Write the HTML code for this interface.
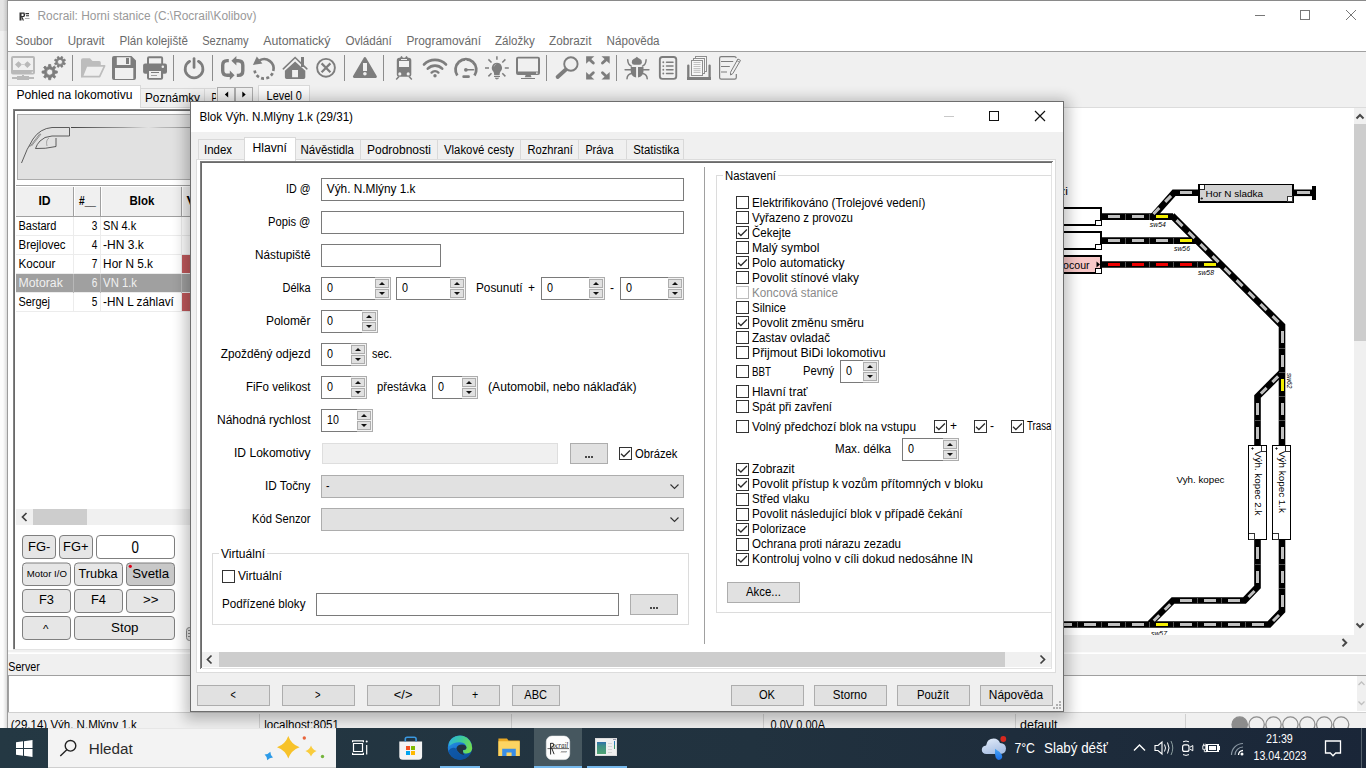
<!DOCTYPE html>
<html><head><meta charset="utf-8"><title>Rocrail</title>
<style>
html,body{margin:0;padding:0;background:#f0f0f0;overflow:hidden;}
body{width:1366px;height:768px;position:relative;font-family:"Liberation Sans",sans-serif;}
svg{position:absolute;left:0;top:0;display:block;font-family:"Liberation Sans",sans-serif;}
svg rect{shape-rendering:crispEdges;}
</style></head><body>
<svg width="1366" height="768" viewBox="0 0 1366 768">
<rect x="0" y="0" width="1366" height="768" fill="#f0f0f0" />
<rect x="0" y="0" width="8" height="31" fill="#e4e4e4" />
<rect x="0" y="31" width="8" height="39" fill="#f0f0f0" />
<rect x="0" y="70" width="8" height="658" fill="#fcfcfc" />
<defs><linearGradient id="lsh" x1="0" x2="1" y1="0" y2="0"><stop offset="0" stop-color="#000" stop-opacity="0"/><stop offset="1" stop-color="#000" stop-opacity="0.13"/></linearGradient><linearGradient id="rsh" x1="0" x2="1" y1="0" y2="0"><stop offset="0" stop-color="#000" stop-opacity="0.30"/><stop offset="1" stop-color="#000" stop-opacity="0"/></linearGradient><linearGradient id="tsh" x1="0" x2="0" y1="0" y2="1"><stop offset="0" stop-color="#000" stop-opacity="0"/><stop offset="1" stop-color="#000" stop-opacity="0.25"/></linearGradient><linearGradient id="bsh" x1="0" x2="0" y1="0" y2="1"><stop offset="0" stop-color="#000" stop-opacity="0.35"/><stop offset="1" stop-color="#000" stop-opacity="0"/></linearGradient><linearGradient id="tb" x1="0" x2="1" y1="0" y2="0"><stop offset="0" stop-color="#243843"/><stop offset="0.55" stop-color="#21323f"/><stop offset="1" stop-color="#1a2638"/></linearGradient></defs>
<rect x="3" y="0" width="4" height="728" fill="url(#lsh)" />
<rect x="8" y="1" width="1358" height="50" fill="#ffffff" />
<rect x="7" y="0" width="1359" height="1" fill="#8a8a8a" />
<rect x="7" y="0" width="1" height="728" fill="#9c9c9c" />
<rect x="8" y="51" width="1358" height="1" fill="#a0a0a0" />
<path d="M19.5,12.5h2v8h-2z M21.5,12.5h3v1.2h-3z M23.500,13.500h1.5v2.5h-1.5z M21.5,16h3v1h-3z M22.500,17l1.500,3.500h-1.3l-1.200,-3z" fill="#333" />
<path d="M25.5,13h3.500v1.200h-3.500z M26,15.200h3v1h-3z" fill="#333" />
<path d="M25,18h4.5v0.8h-4.5z" fill="#999" />
<text x="37.5" y="20" font-size="12" fill="#999999" textLength="219.0" lengthAdjust="spacingAndGlyphs" >Rocrail: Horni stanice (C:\Rocrail\Kolibov)</text>
<rect x="1255" y="15" width="10" height="1" fill="#777" />
<rect x="1300.5" y="10.5" width="9" height="9" fill="none" stroke="#777" stroke-width="1"/>
<path d="M1346,10 L1356,20 M1356,10 L1346,20" fill="none" stroke="#777" stroke-width="1" />
<text x="15.5" y="44.7" font-size="12" fill="#6a6a6a" textLength="37.3" lengthAdjust="spacingAndGlyphs" >Soubor</text>
<text x="67.7" y="44.7" font-size="12" fill="#6a6a6a" textLength="36.8" lengthAdjust="spacingAndGlyphs" >Upravit</text>
<text x="119.5" y="44.7" font-size="12" fill="#6a6a6a" textLength="68.4" lengthAdjust="spacingAndGlyphs" >Plán kolejiště</text>
<text x="202.2" y="44.7" font-size="12" fill="#6a6a6a" textLength="46.3" lengthAdjust="spacingAndGlyphs" >Seznamy</text>
<text x="263.2" y="44.7" font-size="12" fill="#6a6a6a" textLength="67.2" lengthAdjust="spacingAndGlyphs" >Automatický</text>
<text x="345.4" y="44.7" font-size="12" fill="#6a6a6a" textLength="46.4" lengthAdjust="spacingAndGlyphs" >Ovládání</text>
<text x="406.4" y="44.7" font-size="12" fill="#6a6a6a" textLength="74.6" lengthAdjust="spacingAndGlyphs" >Programování</text>
<text x="495" y="44.7" font-size="12" fill="#6a6a6a" textLength="39.8" lengthAdjust="spacingAndGlyphs" >Záložky</text>
<text x="549.1" y="44.7" font-size="12" fill="#6a6a6a" textLength="42.4" lengthAdjust="spacingAndGlyphs" >Zobrazit</text>
<text x="606.6" y="44.7" font-size="12" fill="#6a6a6a" textLength="53.0" lengthAdjust="spacingAndGlyphs" >Nápověda</text>
<rect x="8" y="52" width="1358" height="56" fill="#f0f0f0" />
<rect x="72" y="55" width="1" height="26" fill="#8c8c8c" />
<rect x="173" y="55" width="1" height="26" fill="#8c8c8c" />
<rect x="212" y="55" width="1" height="26" fill="#8c8c8c" />
<rect x="344" y="55" width="1" height="26" fill="#8c8c8c" />
<rect x="383" y="55" width="1" height="26" fill="#8c8c8c" />
<rect x="546" y="55" width="1" height="26" fill="#8c8c8c" />
<rect x="616" y="55" width="1" height="26" fill="#8c8c8c" />
<path d="M13,56 h20 q2,0 2,2 v14.500 q0,2 -2,2 h-20 q-2,0 -2,-2 v-14.500 q0,-2 2,-2 z M13,58 v12 h20 v-12 z" fill="#b9b9b9" fill-rule="evenodd"/>
<path d="M15,64.6 l3.500,-3.300 l3.500,3.300 l-3.500,3.300 z M23.900,64.6 l3.500,-3.300 l3.500,3.300 l-3.500,3.300 z" fill="#b9b9b9" />
<rect x="20.5" y="63.8" width="4.9" height="1.6" fill="#cfcfcf" />
<rect x="22.9" y="63.3" width="0.2" height="2.7" fill="#f0f0f0" />
<circle cx="32.300" cy="72.300" r="0.700" fill="#f0f0f0"/>
<rect x="22" y="74.5" width="2" height="1.5" fill="#b9b9b9" />
<rect x="17" y="76" width="12" height="3.6" fill="#b9b9b9" />
<rect x="12" y="77.4" width="22" height="1.6" fill="#b9b9b9" />
<path d="M55.04,70.79 L57.34,71.10 L57.34,73.10 L55.04,73.41 L54.40,74.95 L55.80,76.79 L54.39,78.20 L52.55,76.80 L51.01,77.44 L50.70,79.74 L48.70,79.74 L48.39,77.44 L46.85,76.80 L45.01,78.20 L43.60,76.79 L45.00,74.95 L44.36,73.41 L42.06,73.10 L42.06,71.10 L44.36,70.79 L45.00,69.25 L43.60,67.41 L45.01,66.00 L46.85,67.40 L48.39,66.76 L48.70,64.46 L50.70,64.46 L51.01,66.76 L52.55,67.40 L54.39,66.00 L55.80,67.41 L54.40,69.25 Z M52.800000000000004,72.1 A3.1,3.1 0 1,0 46.6,72.1 A3.1,3.1 0 1,0 52.800000000000004,72.1 Z" fill="#7d7d7d" stroke="#7d7d7d" stroke-width="0.8" fill-rule="evenodd" stroke-linejoin="round"/>
<path d="M63.87,62.38 L65.44,63.25 L64.80,64.79 L63.07,64.30 L62.40,64.97 L62.89,66.70 L61.35,67.34 L60.48,65.77 L59.52,65.77 L58.65,67.34 L57.11,66.70 L57.60,64.97 L56.93,64.30 L55.20,64.79 L54.56,63.25 L56.13,62.38 L56.13,61.42 L54.56,60.55 L55.20,59.01 L56.93,59.50 L57.60,58.83 L57.11,57.10 L58.65,56.46 L59.52,58.03 L60.48,58.03 L61.35,56.46 L62.89,57.10 L62.40,58.83 L63.07,59.50 L64.80,59.01 L65.44,60.55 L63.87,61.42 Z M62.5,61.9 A2.5,2.5 0 1,0 57.5,61.9 A2.5,2.5 0 1,0 62.5,61.9 Z" fill="#7d7d7d" stroke="#7d7d7d" stroke-width="0.8" fill-rule="evenodd" stroke-linejoin="round"/>
<path d="M81,77.600 V60 Q81,58.2 83,58.2 H90 L92.5,61.1 H99.3 Q100.8,61.1 100.8,62.6 V65.5 H86.5 L82,77.600 Z" fill="#bdbdbd" />
<path d="M86.6,65.8 H104.6 L99.6,76.6 H82.2 Z" fill="#f0f0f0" stroke="#bdbdbd" stroke-width="1.7" stroke-linejoin="round"/>
<path d="M114,56 H131.5 L136,60.5 V78 Q136,80 134,80 H114 Q112,80 112,78 V58 Q112,56 114,56 Z M116.8,57.3 V64.9 H130.5 V57.3 Z M115,68 V79 H133.3 V68 Z" fill="#7d7d7d" fill-rule="evenodd"/>
<rect x="126" y="58.2" width="2.7" height="5.4" fill="#7d7d7d" />
<path d="M147,64.5 V58.2 Q147,56.2 149,56.2 H161.1 Q163.1,56.2 163.1,58.2 V64.5 H161.2 V58.300 H149 V64.5 Z" fill="#7d7d7d" />
<path d="M145.1,63.6 H165 Q167,63.6 167,65.6 V71.8 Q167,73.8 165,73.8 H145.1 Q143.1,73.8 143.1,71.8 V65.6 Q143.1,63.6 145.1,63.6 Z" fill="#7d7d7d" />
<circle cx="162.800" cy="66.800" r="1.250" fill="#f0f0f0"/>
<path d="M147,70 H163.1 V77.800 Q163.1,79.800 161.1,79.800 H149 Q147,79.800 147,77.800 Z" fill="#7d7d7d" />
<rect x="149" y="71" width="12.2" height="7" fill="#f0f0f0" />
<rect x="150.5" y="72" width="8.8" height="1.3" fill="#7d7d7d" />
<rect x="150.5" y="74.6" width="6.0" height="1.2" fill="#a0a0a0" />
<path d="M189.7,61.3 A8.85,8.85 0 1,0 198.4,61.3" fill="none" stroke="#7d7d7d" stroke-width="2.7" stroke-linecap="round"/>
<path d="M194.05,58.6 V67.500" fill="none" stroke="#7d7d7d" stroke-width="2.7" stroke-linecap="round"/>
<path d="M228.8,60.6 H227.2 Q222.7,60.6 222.7,65.2 V70.8 Q222.7,75.3 227.2,75.3 H230.500" fill="none" stroke="#7d7d7d" stroke-width="3.4" />
<path d="M229.8,70.6 L234.6,75.3 L229.8,80 Z" fill="#7d7d7d" />
<path d="M236.8,75.4 H238.300 Q242.8,75.4 242.8,70.8 V65.2 Q242.8,60.7 238.300,60.7 H235.500" fill="none" stroke="#7d7d7d" stroke-width="3.4" />
<path d="M236.4,56 L231.400,60.7 L236.4,65.4 Z" fill="#7d7d7d" />
<path d="M259.500,60.300 A9.5,9.5 0 0,1 273.300,71" fill="none" stroke="#7d7d7d" stroke-width="2.6" />
<path d="M256.8,56.4 L252.9,65 L262.4,63.6 Z" fill="#7d7d7d" />
<path d="M273.300,71 A9.5,9.5 0 0,1 254.600,70.500" fill="none" stroke="#7d7d7d" stroke-width="2.7" stroke-dasharray="3 2.300" stroke-dashoffset="-2.300"/>
<path d="M283.3,68.8 L295.1,57.5 L306.9,68.8" fill="none" stroke="#7d7d7d" stroke-width="1.6" stroke-linecap="round"/>
<path d="M284.9,70.7 L295.1,61.6 L305.3,70.7 V77.300 Q305.3,79 303.600,79 H286.600 Q284.9,79 284.9,77.300 Z M292.1,69.9 V77.3 H298 V69.9 Z" fill="#7d7d7d" fill-rule="evenodd"/>
<rect x="300.8" y="56.8" width="2.7" height="9.7" fill="#7d7d7d" />
<circle cx="326" cy="67.8" r="8.9" fill="none" stroke="#7d7d7d" stroke-width="1.9"/>
<path d="M321.6,63.4 l8.800,8.800 M330.4,63.4 l-8.800,8.800" fill="none" stroke="#7d7d7d" stroke-width="2.2" />
<path d="M364.9,58.3 L375.6,76.6 H354.2 Z" fill="#7d7d7d" stroke="#7d7d7d" stroke-width="2.6" stroke-linejoin="round"/>
<rect x="363.4" y="62.9" width="3.1" height="8.5" fill="#f0f0f0" />
<circle cx="364.9" cy="73.7" r="1.8" fill="#f0f0f0"/>
<path d="M399.3,57.8 h9.500 q2.500,0 2.500,2.500 v14.500 q0,2 -2,2 h-10.500 q-2,0 -2,-2 v-14.500 q0,-2.500 2.500,-2.500 z" fill="#7d7d7d" />
<rect x="398.7" y="61.2" width="10.6" height="5.5" fill="#f0f0f0" />
<rect x="401.4" y="59.1" width="5.2" height="1.2" fill="#f0f0f0" />
<circle cx="399.8" cy="73.9" r="1.55" fill="#f0f0f0"/><circle cx="408.2" cy="73.9" r="1.55" fill="#f0f0f0"/>
<path d="M399,76.5 l-2.800,3 M409,76.5 l2.800,3" fill="none" stroke="#7d7d7d" stroke-width="1.5" />
<path d="M400.500,58 l1,-2 l1,2 z M405.500,58 l1,-2 l1,2 z" fill="#7d7d7d" stroke="#7d7d7d" stroke-width="0.6" />
<path d="M424,64.5 A15.500,15.500 0 0,1 446,64.5" fill="none" stroke="#7d7d7d" stroke-width="2.6" stroke-linecap="round"/>
<path d="M427.8,68.7 A10,10 0 0,1 442.2,68.7" fill="none" stroke="#7d7d7d" stroke-width="2.6" stroke-linecap="round"/>
<path d="M431.6,72.6 A5,5 0 0,1 438.4,72.6" fill="none" stroke="#7d7d7d" stroke-width="2.4" stroke-linecap="round"/>
<circle cx="435" cy="75.8" r="1.7" fill="#7d7d7d"/>
<path d="M457.300,75.500 A10.4,10.4 0 1,1 474.500,75.500" fill="none" stroke="#7d7d7d" stroke-width="2.8" stroke-linecap="butt"/>
<path d="M465.9,69.8 H473.500" fill="none" stroke="#7d7d7d" stroke-width="1.6" stroke-linecap="round"/>
<circle cx="465.900" cy="69.800" r="1.900" fill="#7d7d7d"/>
<path d="M463.600,76.650 H468.600" fill="none" stroke="#7d7d7d" stroke-width="2.6" stroke-linecap="round"/>
<path d="M465.900,60 v1.800 M459.700,62.800 l1.200,1.200 M472.100,62.800 l-1.200,1.200" fill="none" stroke="#f0f0f0" stroke-width="1" />
<path d="M496.9,62.8 a5.1,5.1 0 0,1 3.600,8.700 q-0.900,1.200 -0.900,3.800 h-5.400 q0,-2.600 -0.900,-3.800 a5.1,5.1 0 0,1 3.600,-8.700 z" fill="#7d7d7d" />
<rect x="494.3" y="76" width="5.2" height="1.2" fill="#7d7d7d" />
<path d="M495,78 h3.800 l-1.900,1.300 z" fill="#7d7d7d" stroke="#7d7d7d" stroke-width="0.5" />
<path d="M496.9,56.3 v3.500 M485,68 h4 M504.800,68 h4 M488.4,59.4 l3.100,3.100 M505.4,59.4 l-3.100,3.100 M488.4,76.4 l3.100,-3.100 M505.4,76.4 l-3.100,-3.100" fill="none" stroke="#7d7d7d" stroke-width="1.5" />
<path d="M494,66.500 q0.500,-2 2.300,-2.500" fill="none" stroke="#b0b0b0" stroke-width="0.8" />
<path d="M518,56.8 h20 q2,0 2,2 v14.100 q0,2 -2,2 h-20 q-2,0 -2,-2 v-14.100 q0,-2 2,-2 z M518,58.500 v12.900 h20 v-12.900 z" fill="#7d7d7d" fill-rule="evenodd"/>
<circle cx="536.900" cy="73.100" r="0.900" fill="#f0f0f0"/>
<path d="M525.600,74.900 h5.100 l0.800,2.300 h-6.700 z" fill="#7d7d7d" />
<rect x="521" y="77.8" width="14.2" height="1.5" fill="#7d7d7d" />
<circle cx="570.9" cy="64" r="6.700" fill="none" stroke="#7d7d7d" stroke-width="1.900"/>
<path d="M565.600,69.800 L557.600,77" fill="none" stroke="#7d7d7d" stroke-width="3.9" stroke-linecap="round"/>
<path d="M586.1,56.3 L594.3000000000001,56.3 L586.1,63.8 Z" fill="#7d7d7d" />
<path d="M589.1,59.099999999999994 L593.3000000000001,63.0" fill="none" stroke="#7d7d7d" stroke-width="2.9" stroke-linecap="round"/>
<path d="M609.7,56.3 L601.5,56.3 L609.7,63.8 Z" fill="#7d7d7d" />
<path d="M606.7,59.099999999999994 L602.5,63.0" fill="none" stroke="#7d7d7d" stroke-width="2.9" stroke-linecap="round"/>
<path d="M586.1,79.5 L594.3000000000001,79.5 L586.1,72.0 Z" fill="#7d7d7d" />
<path d="M589.1,76.7 L593.3000000000001,72.8" fill="none" stroke="#7d7d7d" stroke-width="2.9" stroke-linecap="round"/>
<path d="M609.7,79.5 L601.5,79.5 L609.7,72.0 Z" fill="#7d7d7d" />
<path d="M606.7,76.7 L602.5,72.8" fill="none" stroke="#7d7d7d" stroke-width="2.9" stroke-linecap="round"/>
<path d="M636.850,56.800 q1.200,1.400 3.200,2.200 q2,1 1.900,3.400 q-0.200,2.400 -2.600,2.400 h-5 q-2.400,0 -2.600,-2.400 q-0.100,-2.400 1.900,-3.400 q2,-0.800 3.200,-2.200 z" fill="#7d7d7d" />
<path d="M630.700,67.100 h5.400 v10.500 q-5.400,-1.200 -5.400,-6.500 z M643.500,67.100 h-5.500 v10.500 q5.500,-1.200 5.500,-6.500 z" fill="#7d7d7d" />
<path d="M627.700,59.800 q0.200,5 3.600,6.300 M646.100,59.800 q-0.200,5 -3.600,6.300 M625.100,69.800 h5.600 M643.500,69.800 h5.400 M631.500,73.600 q-4.300,0.800 -4.500,5.200 M642.700,73.600 q4.300,0.800 4.500,5.200" fill="none" stroke="#7d7d7d" stroke-width="1.5" stroke-linecap="round"/>
<rect x="659.85" y="56.95" width="16.4" height="21.9" fill="none" stroke="#7d7d7d" stroke-width="1.9" rx="2.6" style="shape-rendering:geometricPrecision"/>
<circle cx="663.300" cy="62.3" r="0.950" fill="#7d7d7d"/>
<path d="M666.500,62.3 H673" fill="none" stroke="#7d7d7d" stroke-width="1.5" stroke-linecap="round"/>
<circle cx="663.300" cy="66.1" r="0.950" fill="#7d7d7d"/>
<path d="M666.500,66.1 H673" fill="none" stroke="#7d7d7d" stroke-width="1.5" stroke-linecap="round"/>
<circle cx="663.300" cy="69.8" r="0.950" fill="#7d7d7d"/>
<path d="M666.500,69.8 H673" fill="none" stroke="#7d7d7d" stroke-width="1.5" stroke-linecap="round"/>
<circle cx="663.300" cy="73.5" r="0.950" fill="#7d7d7d"/>
<path d="M666.500,73.5 H673" fill="none" stroke="#7d7d7d" stroke-width="1.5" stroke-linecap="round"/>
<path d="M688.300,65.600 V78.300 H709.600 V65.600" fill="none" stroke="#7d7d7d" stroke-width="2.3" stroke-linecap="round"/>
<rect x="687.2" y="77" width="23.5" height="2.8" fill="#7d7d7d" />
<rect x="695.5" y="56.5" width="11.0" height="15.0" fill="#f6f6f6" stroke="#8e8e8e" stroke-width="1" style="shape-rendering:geometricPrecision"/>
<rect x="693.5" y="58.5" width="11.0" height="15.0" fill="#f6f6f6" stroke="#8e8e8e" stroke-width="1" style="shape-rendering:geometricPrecision"/>
<rect x="691.5" y="60.5" width="11.0" height="15.0" fill="#f6f6f6" stroke="#8e8e8e" stroke-width="1" style="shape-rendering:geometricPrecision"/>
<path d="M693.500,62.5 H700.500" fill="none" stroke="#b4b4b4" stroke-width="0.8" />
<path d="M693.500,64.5 H700.500" fill="none" stroke="#b4b4b4" stroke-width="0.8" />
<path d="M693.500,66.5 H700.500" fill="none" stroke="#b4b4b4" stroke-width="0.8" />
<path d="M693.500,68.5 H700.500" fill="none" stroke="#b4b4b4" stroke-width="0.8" />
<path d="M693.500,70.5 H700.500" fill="none" stroke="#c8c8c8" stroke-width="1.6" />
<path d="M693.500,72.5 H700.500" fill="none" stroke="#b4b4b4" stroke-width="0.8" />
<path d="M736.300,58.200 Q736,56.600 734.300,56.600 H721.300 Q719.600,56.600 719.600,58.300 V77.500 Q719.600,79.200 721.300,79.200 H734.600 Q736.300,79.200 736.300,77.500 V74" fill="none" stroke="#7d7d7d" stroke-width="1.2" />
<path d="M721,61.500 H733.200 M721,66.500 H729.800" fill="none" stroke="#7d7d7d" stroke-width="1" />
<path d="M721,72 H727" fill="none" stroke="#a8a8a8" stroke-width="1.6" />
<path d="M737.900,59 L740.500,60.400 L732.800,73.600 L730.600,75 L730.500,72.300 Z" fill="#f0f0f0" stroke="#7d7d7d" stroke-width="1" stroke-linejoin="round"/>
<path d="M736.900,60.700 L739.500,62.100" fill="none" stroke="#7d7d7d" stroke-width="0.8" />
<path d="M730.600,75 L730.550,73.300 L731.900,74.150 Z" fill="#7d7d7d" />
<rect x="140.5" y="88.5" width="64" height="19" fill="#f0f0f0" stroke="#d9d9d9" stroke-width="1"/>
<text x="145" y="101.5" font-size="12" fill="#000" textLength="55" lengthAdjust="spacingAndGlyphs" >Poznámky</text>
<rect x="204.5" y="88.5" width="13" height="19" fill="#f0f0f0" stroke="#d9d9d9" stroke-width="1"/>
<text x="211.5" y="101.5" font-size="12" fill="#000" textLength="6.0" lengthAdjust="spacingAndGlyphs" >P</text>
<rect x="8" y="86" width="133" height="23" fill="#ffffff" />
<rect x="8" y="85" width="133" height="1" fill="#d9d9d9" />
<rect x="140" y="85" width="1" height="23" fill="#d9d9d9" />
<text x="16.5" y="99.4" font-size="12" fill="#000" textLength="116.0" lengthAdjust="spacingAndGlyphs" >Pohled na lokomotivu</text>
<rect x="216" y="86" width="38" height="18" fill="#f0f0f0" />
<rect x="217.5" y="87.5" width="17" height="14" fill="#f0f0f0" stroke="#adadad" stroke-width="1"/>
<rect x="235.5" y="87.5" width="17" height="14" fill="#f0f0f0" stroke="#adadad" stroke-width="1"/>
<path d="M228.2,91.5 v6 l-3.4,-3 z" fill="#000" />
<path d="M242.3,91.5 v6 l3.4,-3 z" fill="#000" />
<rect x="258" y="86" width="52" height="22" fill="#fbfbfb" />
<rect x="258" y="85" width="52" height="1" fill="#d9d9d9" />
<rect x="258" y="85" width="1" height="23" fill="#d9d9d9" />
<rect x="309" y="85" width="1" height="23" fill="#d9d9d9" />
<text x="266.6" y="99.5" font-size="12" fill="#000" textLength="35.2" lengthAdjust="spacingAndGlyphs" >Level 0</text>
<rect x="8" y="108" width="192" height="542" fill="#ffffff" />
<rect x="13" y="109" width="1" height="541" fill="#828282" />
<rect x="14" y="110" width="1" height="539" fill="#696969" />
<rect x="13" y="109" width="187" height="1" fill="#828282" />
<rect x="14" y="110" width="186" height="1" fill="#696969" />
<rect x="13" y="649" width="187" height="1" fill="#e3e3e3" />
<rect x="17.5" y="114.5" width="182" height="65" fill="#e1e1e1" stroke="#adadad" stroke-width="1"/>
<path d="M21.5,163 Q27,148 33,139 Q40,128.500 52,127.500 H69.500 V136 H52 Q44,136.500 40,141 Q37,144 35.5,148.500 Q45,149 56,146.500 V138" fill="none" stroke="#3a3a3a" stroke-width="0.8" />
<path d="M29.5,147 L40,133.500 M31.500,146 L41,134" fill="none" stroke="#555" stroke-width="0.6" />
<path d="M47,146 Q45.500,140 49,138" fill="none" stroke="#888" stroke-width="0.7" />
<defs><linearGradient id="fade" x1="0" x2="1"><stop offset="0" stop-color="#444"/><stop offset="0.4" stop-color="#999"/><stop offset="0.6" stop-color="#e1e1e1"/><stop offset="0.700" stop-color="#bbb"/><stop offset="1" stop-color="#888"/></linearGradient></defs>
<rect x="71" y="127.2" width="129" height="0.8" fill="url(#fade)" />
<rect x="16" y="185" width="184" height="32" fill="#f0f0f0" />
<rect x="16" y="185" width="184" height="1" fill="#a0a0a0" />
<rect x="16" y="216" width="184" height="1" fill="#a0a0a0" />
<rect x="73" y="185" width="1" height="32" fill="#a0a0a0" />
<rect x="74" y="186" width="1" height="30" fill="#ffffff" />
<rect x="100" y="185" width="1" height="32" fill="#a0a0a0" />
<rect x="101" y="186" width="1" height="30" fill="#ffffff" />
<rect x="181" y="185" width="1" height="32" fill="#a0a0a0" />
<rect x="182" y="186" width="1" height="30" fill="#ffffff" />
<rect x="16" y="186" width="184" height="1" fill="#ffffff" />
<text x="38.4" y="204.6" font-size="12.5" fill="#000" font-weight="bold" textLength="12.2" lengthAdjust="spacingAndGlyphs" >ID</text>
<text x="79" y="204.6" font-size="12.5" fill="#000" font-weight="bold" textLength="17" lengthAdjust="spacingAndGlyphs" >#__</text>
<text x="129.4" y="204.6" font-size="12.5" fill="#000" font-weight="bold" textLength="24.9" lengthAdjust="spacingAndGlyphs" >Blok</text>
<text x="186.5" y="204.6" font-size="12.5" fill="#000" font-weight="bold" textLength="9.5" lengthAdjust="spacingAndGlyphs" >V</text>
<rect x="16" y="235" width="184" height="1" fill="#ececec" />
<rect x="73" y="217" width="1" height="19" fill="#ececec" />
<rect x="100" y="217" width="1" height="19" fill="#ececec" />
<rect x="181" y="217" width="1" height="19" fill="#ececec" />
<text x="18.5" y="229.5" font-size="12" fill="#000" textLength="37.9" lengthAdjust="spacingAndGlyphs" >Bastard</text>
<text x="91.8" y="229.5" font-size="12" fill="#000" textLength="5.6" lengthAdjust="spacingAndGlyphs" >3</text>
<text x="103.1" y="229.5" font-size="12" fill="#000" textLength="33.1" lengthAdjust="spacingAndGlyphs" >SN 4.k</text>
<rect x="16" y="254" width="184" height="1" fill="#ececec" />
<rect x="73" y="236" width="1" height="19" fill="#ececec" />
<rect x="100" y="236" width="1" height="19" fill="#ececec" />
<rect x="181" y="236" width="1" height="19" fill="#ececec" />
<text x="18.5" y="248.5" font-size="12" fill="#000" textLength="47.1" lengthAdjust="spacingAndGlyphs" >Brejlovec</text>
<text x="91.8" y="248.5" font-size="12" fill="#000" textLength="5.6" lengthAdjust="spacingAndGlyphs" >4</text>
<text x="103.1" y="248.5" font-size="12" fill="#000" textLength="40.7" lengthAdjust="spacingAndGlyphs" >-HN 3.k</text>
<rect x="182" y="255" width="18" height="18" fill="#c0595c" />
<rect x="16" y="273" width="184" height="1" fill="#ececec" />
<rect x="73" y="255" width="1" height="19" fill="#ececec" />
<rect x="100" y="255" width="1" height="19" fill="#ececec" />
<rect x="181" y="255" width="1" height="19" fill="#ececec" />
<text x="18.5" y="267.5" font-size="12" fill="#000" textLength="37.0" lengthAdjust="spacingAndGlyphs" >Kocour</text>
<text x="91.8" y="267.5" font-size="12" fill="#000" textLength="5.6" lengthAdjust="spacingAndGlyphs" >7</text>
<text x="103.1" y="267.5" font-size="12" fill="#000" textLength="49.9" lengthAdjust="spacingAndGlyphs" >Hor N 5.k</text>
<rect x="16" y="274" width="184" height="18" fill="#a0a0a0" />
<rect x="16" y="292" width="184" height="1" fill="#ececec" />
<rect x="73" y="274" width="1" height="19" fill="#b8b8b8" />
<rect x="100" y="274" width="1" height="19" fill="#b8b8b8" />
<rect x="181" y="274" width="1" height="19" fill="#b8b8b8" />
<text x="18.5" y="286.5" font-size="12" fill="#f0f0f0" textLength="44.3" lengthAdjust="spacingAndGlyphs" >Motorak</text>
<text x="91.8" y="286.5" font-size="12" fill="#f0f0f0" textLength="5.6" lengthAdjust="spacingAndGlyphs" >6</text>
<text x="103.1" y="286.5" font-size="12" fill="#f0f0f0" textLength="33.9" lengthAdjust="spacingAndGlyphs" >VN 1.k</text>
<rect x="182" y="293" width="18" height="18" fill="#c0595c" />
<rect x="16" y="311" width="184" height="1" fill="#ececec" />
<rect x="73" y="293" width="1" height="19" fill="#ececec" />
<rect x="100" y="293" width="1" height="19" fill="#ececec" />
<rect x="181" y="293" width="1" height="19" fill="#ececec" />
<text x="18.5" y="305.5" font-size="12" fill="#000" textLength="31.5" lengthAdjust="spacingAndGlyphs" >Sergej</text>
<text x="91.8" y="305.5" font-size="12" fill="#000" textLength="5.6" lengthAdjust="spacingAndGlyphs" >5</text>
<text x="103.1" y="305.5" font-size="12" fill="#000" textLength="70.7" lengthAdjust="spacingAndGlyphs" >-HN L záhlaví</text>
<rect x="16" y="509" width="184" height="16" fill="#f0f0f0" />
<rect x="33" y="509" width="54" height="16" fill="#cdcdcd" />
<path d="M26.5,513 l-4,4 l4,4" fill="none" stroke="#404040" stroke-width="1.7" />
<rect x="22.5" y="535.5" width="33" height="23" fill="#e6e6e6" stroke="#7f7f7f" stroke-width="1" rx="3.5" style="shape-rendering:geometricPrecision"/>
<text x="28" y="550.8" font-size="13.3" fill="#000" textLength="22.3" lengthAdjust="spacingAndGlyphs" >FG-</text>
<rect x="59.5" y="535.5" width="33" height="23" fill="#e6e6e6" stroke="#7f7f7f" stroke-width="1" rx="3.5" style="shape-rendering:geometricPrecision"/>
<text x="63" y="550.8" font-size="13.3" fill="#000" textLength="25.5" lengthAdjust="spacingAndGlyphs" >FG+</text>
<rect x="96.5" y="535.5" width="78" height="23" fill="#ffffff" stroke="#7f7f7f" stroke-width="1" rx="3.5" style="shape-rendering:geometricPrecision"/>
<text x="131.6" y="552.5" font-size="16" fill="#000" textLength="7.4" lengthAdjust="spacingAndGlyphs" >0</text>
<rect x="22.5" y="563.0" width="48" height="22.5" fill="#e6e6e6" stroke="#7f7f7f" stroke-width="1" rx="3.5" style="shape-rendering:geometricPrecision"/>
<text x="26.8" y="577" font-size="9.3" fill="#000" textLength="40.1" lengthAdjust="spacingAndGlyphs" >Motor I/O</text>
<rect x="74.5" y="563.0" width="48" height="22.5" fill="#e6e6e6" stroke="#7f7f7f" stroke-width="1" rx="3.5" style="shape-rendering:geometricPrecision"/>
<text x="78.6" y="577.6" font-size="13.3" fill="#000" textLength="39.0" lengthAdjust="spacingAndGlyphs" >Trubka</text>
<rect x="126.5" y="563.0" width="48" height="22.5" fill="#c8c8c8" stroke="#7f7f7f" stroke-width="1" rx="3.5" style="shape-rendering:geometricPrecision"/>
<text x="132.2" y="577.6" font-size="13.3" fill="#000" textLength="36.9" lengthAdjust="spacingAndGlyphs" >Svetla</text>
<circle cx="130.3" cy="566.3" r="1.6" fill="#e00018"/>
<rect x="22.5" y="589.5" width="48" height="23" fill="#e6e6e6" stroke="#7f7f7f" stroke-width="1" rx="3.5" style="shape-rendering:geometricPrecision"/>
<text x="39" y="604.4" font-size="13.3" fill="#000" textLength="15" lengthAdjust="spacingAndGlyphs" >F3</text>
<rect x="74.5" y="589.5" width="48" height="23" fill="#e6e6e6" stroke="#7f7f7f" stroke-width="1" rx="3.5" style="shape-rendering:geometricPrecision"/>
<text x="91" y="604.4" font-size="13.3" fill="#000" textLength="15" lengthAdjust="spacingAndGlyphs" >F4</text>
<rect x="126.5" y="589.5" width="48" height="23" fill="#e6e6e6" stroke="#7f7f7f" stroke-width="1" rx="3.5" style="shape-rendering:geometricPrecision"/>
<text x="143" y="604" font-size="13.3" fill="#000" textLength="15.5" lengthAdjust="spacingAndGlyphs" >&gt;&gt;</text>
<rect x="22.5" y="616.5" width="48" height="23" fill="#e6e6e6" stroke="#7f7f7f" stroke-width="1" rx="3.5" style="shape-rendering:geometricPrecision"/>
<text x="43" y="632.5" font-size="11" fill="#000" textLength="5.5" lengthAdjust="spacingAndGlyphs" >^</text>
<rect x="74.5" y="616.5" width="100" height="23" fill="#e6e6e6" stroke="#7f7f7f" stroke-width="1" rx="3.5" style="shape-rendering:geometricPrecision"/>
<text x="111" y="631.6" font-size="13.3" fill="#000" textLength="27.5" lengthAdjust="spacingAndGlyphs" >Stop</text>
<rect x="186.5" y="627.5" width="13" height="13" fill="#e8e8e8" stroke="#888" stroke-width="1" rx="3" style="shape-rendering:geometricPrecision"/>
<rect x="188" y="630" width="12" height="1" fill="#888" />
<rect x="188" y="633" width="12" height="1" fill="#888" />
<rect x="188" y="636" width="12" height="1" fill="#888" />
<rect x="200" y="108" width="1154" height="527" fill="#ffffff" />
<rect x="200" y="107" width="1166" height="1" fill="#dcdcdc" />
<rect x="1354" y="108" width="12" height="527" fill="#f0f0f0" />
<rect x="1354" y="124" width="12" height="217" fill="#cdcdcd" />
<path d="M1356.5,118.500 l3.500,-3.500 l3.500,3.500" fill="none" stroke="#484848" stroke-width="2" />
<path d="M1356.5,623.5 l3.500,3.500 l3.500,-3.500" fill="none" stroke="#484848" stroke-width="2" />
<rect x="200" y="635" width="1166" height="17" fill="#f0f0f0" />
<path d="M1342.500,639 l3.700,3.700 l-3.700,3.700" fill="none" stroke="#484848" stroke-width="2" />
<path d="M1101,216.6 L1173,216.6" fill="none" stroke="#000000" stroke-width="6.6" stroke-linejoin="miter" stroke-linecap="butt"/>
<path d="M1150.5,219.1 L1174,192.8 L1198,192.8" fill="none" stroke="#000000" stroke-width="6.6" stroke-linejoin="miter" stroke-linecap="butt"/>
<path d="M1172,215.6 L1282,325.6 L1282,445" fill="none" stroke="#000000" stroke-width="6.6" stroke-linejoin="miter" stroke-linecap="butt"/>
<path d="M1101,240.6 L1198,240.6" fill="none" stroke="#000000" stroke-width="6.6" stroke-linejoin="miter" stroke-linecap="butt"/>
<path d="M1101,264.5 L1222,264.5" fill="none" stroke="#000000" stroke-width="6.6" stroke-linejoin="miter" stroke-linecap="butt"/>
<rect x="1107.5" y="215.1" width="12.5" height="3.0" fill="#c0c0c0" />
<rect x="1131.5" y="215.1" width="12.5" height="3.0" fill="#c0c0c0" />
<rect x="1155.5" y="215.1" width="12.5" height="3.0" fill="#f4ee00" />
<path d="M1150.5,217.1 L1174,192.8" fill="none" stroke="#c0c0c0" stroke-width="3" stroke-dasharray="8.45 8.45" stroke-dashoffset="-4.23"/>
<rect x="1179.5" y="191.3" width="12.5" height="3.0" fill="#c0c0c0" />
<rect x="1107.5" y="239.1" width="12.5" height="3.0" fill="#c0c0c0" />
<rect x="1131.5" y="239.1" width="12.5" height="3.0" fill="#c0c0c0" />
<rect x="1155.5" y="239.1" width="12.5" height="3.0" fill="#c0c0c0" />
<rect x="1179.5" y="239.1" width="12.5" height="3.0" fill="#f4ee00" />
<rect x="1107.5" y="263.0" width="12.5" height="3.0" fill="#ee0000" />
<rect x="1131.5" y="263.0" width="12.5" height="3.0" fill="#ee0000" />
<rect x="1155.5" y="263.0" width="12.5" height="3.0" fill="#ee0000" />
<rect x="1179.5" y="263.0" width="12.5" height="3.0" fill="#ee0000" />
<rect x="1203.5" y="263.0" width="12.5" height="3.0" fill="#f4ee00" />
<path d="M1173.5,217.1 L1281.5,325.1" fill="none" stroke="#c0c0c0" stroke-width="3" stroke-dasharray="8.49 8.49" stroke-dashoffset="-4.24"/>
<rect x="1280.5" y="330.5" width="3.0" height="12.5" fill="#c0c0c0" />
<rect x="1280.5" y="354.5" width="3.0" height="12.5" fill="#c0c0c0" />
<rect x="1280.5" y="402.5" width="3.0" height="12.5" fill="#c0c0c0" />
<rect x="1280.5" y="426.5" width="3.0" height="12.5" fill="#c0c0c0" />
<rect x="1280.5" y="378.5" width="3.0" height="12.5" fill="#f4ee00" />
<path d="M1282,372 L1257.5,396.5 L1257.5,445" fill="none" stroke="#000000" stroke-width="6.6" stroke-linejoin="miter" stroke-linecap="butt"/>
<path d="M1281,373.5 L1258,396.5" fill="none" stroke="#c0c0c0" stroke-width="3" stroke-dasharray="8.13 8.13" stroke-dashoffset="-4.07"/>
<rect x="1256.0" y="402.5" width="3.0" height="12.5" fill="#c0c0c0" />
<rect x="1256.0" y="426.5" width="3.0" height="12.5" fill="#c0c0c0" />
<rect x="1280.5" y="402.5" width="3.0" height="12.5" fill="#c0c0c0" />
<rect x="1280.5" y="426.5" width="3.0" height="12.5" fill="#c0c0c0" />
<path d="M1293,192.8 L1312,192.8" fill="none" stroke="#000000" stroke-width="6.6" stroke-linejoin="miter" stroke-linecap="butt"/>
<rect x="1297.0" y="191.3" width="12.5" height="3.0" fill="#c0c0c0" />
<rect x="1312" y="185.5" width="3.5" height="14.5" fill="#000" />
<path d="M1257.5,540 L1257.5,587 L1244.5,600.5 L1173,600.5 L1150,623.5" fill="none" stroke="#000000" stroke-width="6.6" stroke-linejoin="miter" stroke-linecap="butt"/>
<path d="M1282,540 L1282,611 L1269,624.5 L1063,624.5" fill="none" stroke="#000000" stroke-width="6.6" stroke-linejoin="miter" stroke-linecap="butt"/>
<rect x="1256.0" y="546.5" width="3.0" height="12.5" fill="#c0c0c0" />
<rect x="1256.0" y="570.5" width="3.0" height="12.5" fill="#c0c0c0" />
<path d="M1257.5,588 L1245.5,600" fill="none" stroke="#c0c0c0" stroke-width="3" stroke-dasharray="8.49 8.49" stroke-dashoffset="-4.24"/>
<rect x="1179.5" y="599.0" width="12.5" height="3.0" fill="#c0c0c0" />
<rect x="1203.5" y="599.0" width="12.5" height="3.0" fill="#c0c0c0" />
<rect x="1227.5" y="599.0" width="12.5" height="3.0" fill="#c0c0c0" />
<path d="M1173,601.5 L1151,623.5" fill="none" stroke="#c0c0c0" stroke-width="3" stroke-dasharray="7.78 7.78" stroke-dashoffset="-3.89"/>
<rect x="1280.5" y="546.5" width="3.0" height="12.5" fill="#c0c0c0" />
<rect x="1280.5" y="570.5" width="3.0" height="12.5" fill="#c0c0c0" />
<rect x="1280.5" y="594.5" width="3.0" height="12.5" fill="#c0c0c0" />
<path d="M1282,612 L1270,624" fill="none" stroke="#c0c0c0" stroke-width="3" stroke-dasharray="8.49 8.49" stroke-dashoffset="-4.24"/>
<rect x="1059.5" y="623.0" width="12.5" height="3.0" fill="#c0c0c0" />
<rect x="1083.5" y="623.0" width="12.5" height="3.0" fill="#c0c0c0" />
<rect x="1107.5" y="623.0" width="12.5" height="3.0" fill="#c0c0c0" />
<rect x="1131.5" y="623.0" width="12.5" height="3.0" fill="#c0c0c0" />
<rect x="1179.5" y="623.0" width="12.5" height="3.0" fill="#c0c0c0" />
<rect x="1203.5" y="623.0" width="12.5" height="3.0" fill="#c0c0c0" />
<rect x="1227.5" y="623.0" width="12.5" height="3.0" fill="#c0c0c0" />
<rect x="1251.5" y="623.0" width="12.5" height="3.0" fill="#c0c0c0" />
<rect x="1155.5" y="623.0" width="12.5" height="3.0" fill="#f4ee00" />
<rect x="1125" y="213.6" width="1" height="6.0" fill="#505050" />
<rect x="1149" y="213.6" width="1" height="6.0" fill="#505050" />
<rect x="1125" y="237.6" width="1" height="6.0" fill="#505050" />
<rect x="1149" y="237.6" width="1" height="6.0" fill="#505050" />
<rect x="1173" y="237.6" width="1" height="6.0" fill="#505050" />
<rect x="1125" y="261.5" width="1" height="6.0" fill="#505050" />
<rect x="1149" y="261.5" width="1" height="6.0" fill="#505050" />
<rect x="1173" y="261.5" width="1" height="6.0" fill="#505050" />
<rect x="1197" y="261.5" width="1" height="6.0" fill="#505050" />
<rect x="1077" y="621.5" width="1" height="6.0" fill="#505050" />
<rect x="1101" y="621.5" width="1" height="6.0" fill="#505050" />
<rect x="1125" y="621.5" width="1" height="6.0" fill="#505050" />
<rect x="1149" y="621.5" width="1" height="6.0" fill="#505050" />
<rect x="1173" y="621.5" width="1" height="6.0" fill="#505050" />
<rect x="1197" y="621.5" width="1" height="6.0" fill="#505050" />
<rect x="1221" y="621.5" width="1" height="6.0" fill="#505050" />
<rect x="1245" y="621.5" width="1" height="6.0" fill="#505050" />
<rect x="1197" y="597.5" width="1" height="6.0" fill="#505050" />
<rect x="1221" y="597.5" width="1" height="6.0" fill="#505050" />
<rect x="1279" y="348" width="6" height="1" fill="#505050" />
<rect x="1279" y="372" width="6" height="1" fill="#505050" />
<rect x="1279" y="396" width="6" height="1" fill="#505050" />
<rect x="1279" y="420" width="6" height="1" fill="#505050" />
<rect x="1254.5" y="420" width="6.0" height="1" fill="#505050" />
<rect x="1279" y="564" width="6" height="1" fill="#505050" />
<rect x="1279" y="588" width="6" height="1" fill="#505050" />
<rect x="1254.5" y="564" width="6.0" height="1" fill="#505050" />
<rect x="1040.8" y="207.8" width="60.4" height="17.4" fill="#ffffff" stroke="#000" stroke-width="1.6"/>
<rect x="1040.8" y="231.8" width="60.4" height="17.4" fill="#ffffff" stroke="#000" stroke-width="1.6"/>
<rect x="1040.8" y="255.8" width="60.4" height="17.4" fill="#f8c8c8" stroke="#000" stroke-width="1.6"/>
<rect x="1095.0" y="220.0" width="6.5" height="5.5" fill="#ffffff" stroke="#000" stroke-width="1"/>
<rect x="1095.0" y="244.0" width="6.5" height="5.5" fill="#ffffff" stroke="#000" stroke-width="1"/>
<rect x="1095.0" y="268.0" width="6.5" height="5.5" fill="#ffffff" stroke="#000" stroke-width="1"/>
<text x="1056" y="268.8" font-size="11" fill="#000" textLength="33.6" lengthAdjust="spacingAndGlyphs" >Kocour</text>
<path d="M1096.500,261.500 v6 l3.500,-3 z" fill="#000" />
<text x="1059.3" y="195" font-size="11" fill="#000" textLength="8.7" lengthAdjust="spacingAndGlyphs" >zi</text>
<rect x="1198.8" y="184.3" width="93.9" height="17.4" fill="#d2d2d2" stroke="#000" stroke-width="1.6"/>
<rect x="1199.9" y="184.9" width="4.2" height="4.2" fill="#ffffff" stroke="#000" stroke-width="0.8"/>
<rect x="1287.4" y="196.4" width="5.2" height="5.2" fill="#ffffff" stroke="#000" stroke-width="0.8"/>
<path d="M1200.500,198.500 h2.5 M1201.800,197.200 v2.5" fill="none" stroke="#000" stroke-width="0.7" />
<text x="1205.5" y="197" font-size="9.5" fill="#000" textLength="57.5" lengthAdjust="spacingAndGlyphs" >Hor N sladka</text>
<text x="1149.8" y="226.6" font-size="7.5" fill="#000" font-style="italic" textLength="16.0" lengthAdjust="spacingAndGlyphs" >sw54</text>
<text x="1174" y="250.8" font-size="7.5" fill="#000" font-style="italic" textLength="16" lengthAdjust="spacingAndGlyphs" >sw56</text>
<text x="1198" y="274.7" font-size="7.5" fill="#000" font-style="italic" textLength="16" lengthAdjust="spacingAndGlyphs" >sw58</text>
<text x="1151" y="636.3" font-size="7.5" fill="#000" font-style="italic" textLength="16" lengthAdjust="spacingAndGlyphs" >sw57</text>
<g transform="translate(1286.500,373) rotate(90)">
<text x="0" y="0" font-size="7.5" fill="#000" font-style="italic" textLength="15.5" lengthAdjust="spacingAndGlyphs" >sw62</text>
</g>
<rect x="1248.65" y="445.65" width="17.7" height="94.2" fill="#ffffff" stroke="#000" stroke-width="1.3"/>
<rect x="1272.65" y="445.65" width="17.7" height="94.2" fill="#ffffff" stroke="#000" stroke-width="1.3"/>
<rect x="1261.4" y="445.9" width="4.7" height="5.2" fill="#ffffff" stroke="#000" stroke-width="0.8"/>
<rect x="1248.9" y="533.9" width="5.7" height="5.7" fill="#ffffff" stroke="#000" stroke-width="0.8"/>
<path d="M1251.2,448.5 h2.6 M1252.5,447.2 v2.6" fill="none" stroke="#000" stroke-width="0.7" />
<rect x="1285.4" y="445.9" width="4.7" height="5.2" fill="#ffffff" stroke="#000" stroke-width="0.8"/>
<rect x="1272.9" y="533.9" width="5.7" height="5.7" fill="#ffffff" stroke="#000" stroke-width="0.8"/>
<path d="M1275.2,448.5 h2.6 M1276.5,447.2 v2.6" fill="none" stroke="#000" stroke-width="0.7" />
<g transform="translate(1254.500,451) rotate(90)">
<text x="0" y="0" font-size="9.5" fill="#000" textLength="64.3" lengthAdjust="spacingAndGlyphs" >Výh. kopec 2.k</text>
</g>
<g transform="translate(1278.500,451) rotate(90)">
<text x="0" y="0" font-size="9.5" fill="#000" textLength="62" lengthAdjust="spacingAndGlyphs" >Výh kopec 1.k</text>
</g>
<text x="1176.5" y="483" font-size="9.5" fill="#000" textLength="48.0" lengthAdjust="spacingAndGlyphs" >Vyh. kopec</text>
<rect x="200" y="635" width="1154" height="17" fill="#f0f0f0" />
<path d="M1342.500,639 l3.700,3.700 l-3.700,3.700" fill="none" stroke="#484848" stroke-width="2" />
<rect x="8" y="650" width="192" height="4" fill="#f0f0f0" />
<rect x="8" y="652" width="1358" height="76" fill="#f0f0f0" />
<rect x="8" y="652" width="1358" height="1" fill="#fafafa" />
<rect x="8" y="653" width="1358" height="1" fill="#ffffff" />
<text x="8.3" y="671" font-size="12" fill="#000" textLength="31.4" lengthAdjust="spacingAndGlyphs" >Server</text>
<rect x="8" y="675" width="1358" height="37" fill="#ffffff" />
<rect x="8" y="675" width="1358" height="1" fill="#a0a0a0" />
<rect x="8" y="675" width="1" height="37" fill="#a0a0a0" />
<rect x="1357" y="676" width="9" height="35" fill="#f0f0f0" />
<path d="M1358.500,685 l3,-3 l3,3 M1358.500,701.500 l3,3 l3,-3" fill="none" stroke="#c0c0c0" stroke-width="1.3" />
<rect x="8" y="712" width="1358" height="16" fill="#f0f0f0" />
<rect x="8" y="712" width="1358" height="1" fill="#d0d0d0" />
<rect x="259" y="714" width="1" height="14" fill="#d0d0d0" />
<rect x="511" y="714" width="1" height="14" fill="#d0d0d0" />
<rect x="763" y="714" width="1" height="14" fill="#d0d0d0" />
<rect x="1015" y="714" width="1" height="14" fill="#d0d0d0" />
<rect x="1185" y="714" width="1" height="14" fill="#d0d0d0" />
<text x="10.7" y="728.6" font-size="12" fill="#000" textLength="126.1" lengthAdjust="spacingAndGlyphs" >(29,14) Výh. N.Mlýny 1.k</text>
<text x="264.3" y="728.6" font-size="12" fill="#000" textLength="74.7" lengthAdjust="spacingAndGlyphs" >localhost:8051</text>
<text x="770.5" y="728.6" font-size="12" fill="#000" textLength="54.5" lengthAdjust="spacingAndGlyphs" >0.0V 0.00A</text>
<text x="1020" y="728.6" font-size="12" fill="#000" textLength="37.5" lengthAdjust="spacingAndGlyphs" >default</text>
<circle cx="1239.7" cy="724.600" r="7.700" fill="#8c8c8c" stroke="#8c8c8c" stroke-width="1.3"/>
<circle cx="1256.6" cy="724.600" r="7.700" fill="none" stroke="#8c8c8c" stroke-width="1.3"/>
<circle cx="1273.5" cy="724.600" r="7.700" fill="none" stroke="#8c8c8c" stroke-width="1.3"/>
<circle cx="1290.4" cy="724.600" r="7.700" fill="none" stroke="#8c8c8c" stroke-width="1.3"/>
<circle cx="1307.3" cy="724.600" r="7.700" fill="none" stroke="#8c8c8c" stroke-width="1.3"/>
<circle cx="1324.2" cy="724.600" r="7.700" fill="none" stroke="#8c8c8c" stroke-width="1.3"/>
<circle cx="1341.1" cy="724.600" r="7.700" fill="none" stroke="#8c8c8c" stroke-width="1.3"/>
<defs><filter id="blur" x="-10%" y="-10%" width="120%" height="120%"><feGaussianBlur stdDeviation="7"/></filter></defs>
<rect x="185" y="99" width="884" height="621" fill="#000" opacity="0.24" filter="url(#blur)" style="shape-rendering:auto"/>
<rect x="190" y="101" width="874" height="611" fill="#f0f0f0" />
<rect x="190.5" y="101.5" width="873" height="610" fill="none" stroke="#6e6e6e" stroke-width="1"/>
<rect x="191" y="102" width="872" height="30" fill="#ffffff" />
<text x="199.5" y="121" font-size="12" fill="#000" textLength="153.5" lengthAdjust="spacingAndGlyphs" >Blok Výh. N.Mlýny 1.k (29/31)</text>
<rect x="944" y="116" width="10" height="1" fill="#c8c8c8" />
<rect x="989.5" y="111.5" width="9" height="9" fill="none" stroke="#111" stroke-width="1"/>
<path d="M1035,111 L1045,121 M1045,111 L1035,121" fill="none" stroke="#111" stroke-width="1.2" />
<rect x="198.5" y="139.5" width="46" height="20" fill="#f0f0f0" stroke="#d9d9d9" stroke-width="1"/>
<text x="204" y="153.7" font-size="12" fill="#000" textLength="28" lengthAdjust="spacingAndGlyphs" >Index</text>
<rect x="295.5" y="139.5" width="65" height="20" fill="#f0f0f0" stroke="#d9d9d9" stroke-width="1"/>
<text x="300.5" y="153.7" font-size="12" fill="#000" textLength="53.5" lengthAdjust="spacingAndGlyphs" >Návěstidla</text>
<rect x="360.5" y="139.5" width="77" height="20" fill="#f0f0f0" stroke="#d9d9d9" stroke-width="1"/>
<text x="367" y="153.7" font-size="12" fill="#000" textLength="64" lengthAdjust="spacingAndGlyphs" >Podrobnosti</text>
<rect x="437.5" y="139.5" width="83" height="20" fill="#f0f0f0" stroke="#d9d9d9" stroke-width="1"/>
<text x="444" y="153.7" font-size="12" fill="#000" textLength="70" lengthAdjust="spacingAndGlyphs" >Vlakové cesty</text>
<rect x="520.5" y="139.5" width="58" height="20" fill="#f0f0f0" stroke="#d9d9d9" stroke-width="1"/>
<text x="527.5" y="153.7" font-size="12" fill="#000" textLength="45.3" lengthAdjust="spacingAndGlyphs" >Rozhraní</text>
<rect x="578.5" y="139.5" width="48" height="20" fill="#f0f0f0" stroke="#d9d9d9" stroke-width="1"/>
<text x="585.4" y="153.7" font-size="12" fill="#000" textLength="28.1" lengthAdjust="spacingAndGlyphs" >Práva</text>
<rect x="626.5" y="139.5" width="57" height="20" fill="#f0f0f0" stroke="#d9d9d9" stroke-width="1"/>
<text x="633.2" y="153.7" font-size="12" fill="#000" textLength="46.2" lengthAdjust="spacingAndGlyphs" >Statistika</text>
<rect x="197" y="160" width="858" height="512" fill="#ffffff" />
<rect x="196" y="159" width="860" height="1" fill="#dcdcdc" />
<rect x="196" y="159" width="1" height="514" fill="#dcdcdc" />
<rect x="1055" y="159" width="1" height="514" fill="#dcdcdc" />
<rect x="196" y="672" width="860" height="1" fill="#dcdcdc" />
<rect x="200" y="161" width="853" height="1" fill="#7e7e7e" />
<rect x="200" y="161" width="1" height="508" fill="#7e7e7e" />
<rect x="201" y="162" width="851" height="1" fill="#6a6a6a" />
<rect x="201" y="162" width="1" height="506" fill="#6a6a6a" />
<rect x="1051" y="163" width="1" height="506" fill="#e3e3e3" />
<rect x="202" y="668" width="850" height="1" fill="#e3e3e3" />
<rect x="244" y="137" width="52" height="24" fill="#ffffff" />
<rect x="244" y="137" width="52" height="1" fill="#d9d9d9" />
<rect x="244" y="137" width="1" height="24" fill="#d9d9d9" />
<rect x="295" y="137" width="1" height="24" fill="#d9d9d9" />
<text x="252.5" y="151.8" font-size="12" fill="#000" textLength="34.5" lengthAdjust="spacingAndGlyphs" >Hlavní</text>
<text x="286" y="193" font-size="12" fill="#000" textLength="24.5" lengthAdjust="spacingAndGlyphs" >ID @</text>
<rect x="321.5" y="178.5" width="362" height="22" fill="#fff" stroke="#7a7a7a" stroke-width="1"/>
<text x="326.8" y="193" font-size="12" fill="#000" textLength="88.7" lengthAdjust="spacingAndGlyphs" >Výh. N.Mlýny 1.k</text>
<text x="268" y="226" font-size="12" fill="#000" textLength="42.5" lengthAdjust="spacingAndGlyphs" >Popis @</text>
<rect x="321.5" y="211.5" width="362" height="22" fill="#fff" stroke="#7a7a7a" stroke-width="1"/>
<text x="255" y="259" font-size="12" fill="#000" textLength="55.5" lengthAdjust="spacingAndGlyphs" >Nástupiště</text>
<rect x="321.5" y="244.5" width="119" height="22" fill="#fff" stroke="#7a7a7a" stroke-width="1"/>
<text x="282.5" y="292" font-size="12" fill="#000" textLength="28.0" lengthAdjust="spacingAndGlyphs" >Délka</text>
<rect x="321.5" y="277.5" width="69" height="22" fill="#f3f3f3" stroke="#adadad" stroke-width="1"/>
<rect x="321.5" y="277.5" width="53" height="22" fill="#ffffff" stroke="#7a7a7a" stroke-width="1"/>
<rect x="374" y="278" width="1" height="21" fill="#ffffff" />
<rect x="375.5" y="279.5" width="13" height="8" fill="#e1e1e1" stroke="#adadad" stroke-width="1"/>
<rect x="375.5" y="289.5" width="13" height="8" fill="#e1e1e1" stroke="#adadad" stroke-width="1"/>
<path d="M379.0,285.0 L382.0,282.0 L385.0,285.0 Z" fill="#111" />
<path d="M379.0,292.0 L382.0,295.0 L385.0,292.0 Z" fill="#111" />
<text x="327" y="292" font-size="12" fill="#000" textLength="6" lengthAdjust="spacingAndGlyphs" >0</text>
<rect x="396.5" y="277.5" width="69" height="22" fill="#f3f3f3" stroke="#adadad" stroke-width="1"/>
<rect x="396.5" y="277.5" width="53" height="22" fill="#ffffff" stroke="#7a7a7a" stroke-width="1"/>
<rect x="449" y="278" width="1" height="21" fill="#ffffff" />
<rect x="450.5" y="279.5" width="13" height="8" fill="#e1e1e1" stroke="#adadad" stroke-width="1"/>
<rect x="450.5" y="289.5" width="13" height="8" fill="#e1e1e1" stroke="#adadad" stroke-width="1"/>
<path d="M454.0,285.0 L457.0,282.0 L460.0,285.0 Z" fill="#111" />
<path d="M454.0,292.0 L457.0,295.0 L460.0,292.0 Z" fill="#111" />
<text x="402" y="292" font-size="12" fill="#000" textLength="6" lengthAdjust="spacingAndGlyphs" >0</text>
<text x="476" y="292" font-size="12" fill="#000" textLength="46.5" lengthAdjust="spacingAndGlyphs" >Posunutí</text>
<text x="528" y="292" font-size="12" fill="#000" textLength="7" lengthAdjust="spacingAndGlyphs" >+</text>
<rect x="541.5" y="277.5" width="63" height="22" fill="#f3f3f3" stroke="#adadad" stroke-width="1"/>
<rect x="541.5" y="277.5" width="47" height="22" fill="#ffffff" stroke="#7a7a7a" stroke-width="1"/>
<rect x="588" y="278" width="1" height="21" fill="#ffffff" />
<rect x="589.5" y="279.5" width="13" height="8" fill="#e1e1e1" stroke="#adadad" stroke-width="1"/>
<rect x="589.5" y="289.5" width="13" height="8" fill="#e1e1e1" stroke="#adadad" stroke-width="1"/>
<path d="M593.0,285.0 L596.0,282.0 L599.0,285.0 Z" fill="#111" />
<path d="M593.0,292.0 L596.0,295.0 L599.0,292.0 Z" fill="#111" />
<text x="547" y="292" font-size="12" fill="#000" textLength="6" lengthAdjust="spacingAndGlyphs" >0</text>
<text x="610" y="292" font-size="12" fill="#000" textLength="4" lengthAdjust="spacingAndGlyphs" >-</text>
<rect x="620.5" y="277.5" width="63" height="22" fill="#f3f3f3" stroke="#adadad" stroke-width="1"/>
<rect x="620.5" y="277.5" width="47" height="22" fill="#ffffff" stroke="#7a7a7a" stroke-width="1"/>
<rect x="667" y="278" width="1" height="21" fill="#ffffff" />
<rect x="668.5" y="279.5" width="13" height="8" fill="#e1e1e1" stroke="#adadad" stroke-width="1"/>
<rect x="668.5" y="289.5" width="13" height="8" fill="#e1e1e1" stroke="#adadad" stroke-width="1"/>
<path d="M672.0,285.0 L675.0,282.0 L678.0,285.0 Z" fill="#111" />
<path d="M672.0,292.0 L675.0,295.0 L678.0,292.0 Z" fill="#111" />
<text x="626" y="292" font-size="12" fill="#000" textLength="6" lengthAdjust="spacingAndGlyphs" >0</text>
<text x="266" y="325" font-size="12" fill="#000" textLength="44.5" lengthAdjust="spacingAndGlyphs" >Poloměr</text>
<rect x="321.5" y="310.5" width="56" height="22" fill="#f3f3f3" stroke="#adadad" stroke-width="1"/>
<rect x="321.5" y="310.5" width="40" height="22" fill="#ffffff" stroke="#7a7a7a" stroke-width="1"/>
<rect x="361" y="311" width="1" height="21" fill="#ffffff" />
<rect x="362.5" y="312.5" width="13" height="8" fill="#e1e1e1" stroke="#adadad" stroke-width="1"/>
<rect x="362.5" y="322.5" width="13" height="8" fill="#e1e1e1" stroke="#adadad" stroke-width="1"/>
<path d="M366.0,318.0 L369.0,315.0 L372.0,318.0 Z" fill="#111" />
<path d="M366.0,325.0 L369.0,328.0 L372.0,325.0 Z" fill="#111" />
<text x="327" y="325" font-size="12" fill="#000" textLength="6" lengthAdjust="spacingAndGlyphs" >0</text>
<text x="220.8" y="358" font-size="12" fill="#000" textLength="89.7" lengthAdjust="spacingAndGlyphs" >Zpožděný odjezd</text>
<rect x="321.5" y="343.5" width="45" height="22" fill="#f3f3f3" stroke="#adadad" stroke-width="1"/>
<rect x="321.5" y="343.5" width="29" height="22" fill="#ffffff" stroke="#7a7a7a" stroke-width="1"/>
<rect x="350" y="344" width="1" height="21" fill="#ffffff" />
<rect x="351.5" y="345.5" width="13" height="8" fill="#e1e1e1" stroke="#adadad" stroke-width="1"/>
<rect x="351.5" y="355.5" width="13" height="8" fill="#e1e1e1" stroke="#adadad" stroke-width="1"/>
<path d="M355.0,351.0 L358.0,348.0 L361.0,351.0 Z" fill="#111" />
<path d="M355.0,358.0 L358.0,361.0 L361.0,358.0 Z" fill="#111" />
<text x="327" y="358" font-size="12" fill="#000" textLength="6" lengthAdjust="spacingAndGlyphs" >0</text>
<text x="372" y="358" font-size="12" fill="#000" textLength="20" lengthAdjust="spacingAndGlyphs" >sec.</text>
<text x="246" y="391" font-size="12" fill="#000" textLength="64.5" lengthAdjust="spacingAndGlyphs" >FiFo velikost</text>
<rect x="321.5" y="376.5" width="45" height="22" fill="#f3f3f3" stroke="#adadad" stroke-width="1"/>
<rect x="321.5" y="376.5" width="29" height="22" fill="#ffffff" stroke="#7a7a7a" stroke-width="1"/>
<rect x="350" y="377" width="1" height="21" fill="#ffffff" />
<rect x="351.5" y="378.5" width="13" height="8" fill="#e1e1e1" stroke="#adadad" stroke-width="1"/>
<rect x="351.5" y="388.5" width="13" height="8" fill="#e1e1e1" stroke="#adadad" stroke-width="1"/>
<path d="M355.0,384.0 L358.0,381.0 L361.0,384.0 Z" fill="#111" />
<path d="M355.0,391.0 L358.0,394.0 L361.0,391.0 Z" fill="#111" />
<text x="327" y="391" font-size="12" fill="#000" textLength="6" lengthAdjust="spacingAndGlyphs" >0</text>
<text x="377" y="391" font-size="12" fill="#000" textLength="49" lengthAdjust="spacingAndGlyphs" >přestávka</text>
<rect x="432.5" y="376.5" width="45" height="22" fill="#f3f3f3" stroke="#adadad" stroke-width="1"/>
<rect x="432.5" y="376.5" width="29" height="22" fill="#ffffff" stroke="#7a7a7a" stroke-width="1"/>
<rect x="461" y="377" width="1" height="21" fill="#ffffff" />
<rect x="462.5" y="378.5" width="13" height="8" fill="#e1e1e1" stroke="#adadad" stroke-width="1"/>
<rect x="462.5" y="388.5" width="13" height="8" fill="#e1e1e1" stroke="#adadad" stroke-width="1"/>
<path d="M466.0,384.0 L469.0,381.0 L472.0,384.0 Z" fill="#111" />
<path d="M466.0,391.0 L469.0,394.0 L472.0,391.0 Z" fill="#111" />
<text x="438" y="391" font-size="12" fill="#000" textLength="6" lengthAdjust="spacingAndGlyphs" >0</text>
<text x="488" y="391" font-size="12" fill="#000" textLength="148.5" lengthAdjust="spacingAndGlyphs" >(Automobil, nebo náklaďák)</text>
<text x="217" y="424" font-size="12" fill="#000" textLength="93.5" lengthAdjust="spacingAndGlyphs" >Náhodná rychlost</text>
<rect x="321.5" y="409.5" width="51" height="22" fill="#f3f3f3" stroke="#adadad" stroke-width="1"/>
<rect x="321.5" y="409.5" width="35" height="22" fill="#ffffff" stroke="#7a7a7a" stroke-width="1"/>
<rect x="356" y="410" width="1" height="21" fill="#ffffff" />
<rect x="357.5" y="411.5" width="13" height="8" fill="#e1e1e1" stroke="#adadad" stroke-width="1"/>
<rect x="357.5" y="421.5" width="13" height="8" fill="#e1e1e1" stroke="#adadad" stroke-width="1"/>
<path d="M361.0,417.0 L364.0,414.0 L367.0,417.0 Z" fill="#111" />
<path d="M361.0,424.0 L364.0,427.0 L367.0,424.0 Z" fill="#111" />
<text x="327" y="424" font-size="12" fill="#000" textLength="11.8" lengthAdjust="spacingAndGlyphs" >10</text>
<text x="234" y="457" font-size="12" fill="#000" textLength="76.5" lengthAdjust="spacingAndGlyphs" >ID Lokomotivy</text>
<rect x="321.5" y="442.5" width="237" height="22" fill="#f0f0f0" stroke="#ffffff" stroke-width="1"/>
<rect x="322.5" y="443.5" width="235" height="20" fill="#f0f0f0" stroke="#dedede" stroke-width="1"/>
<rect x="570.5" y="443.5" width="37" height="20" fill="#e1e1e1" stroke="#adadad" stroke-width="1"/>
<rect x="585" y="456" width="2" height="2" fill="#484848" />
<rect x="588" y="456" width="2" height="2" fill="#484848" />
<rect x="591" y="456" width="2" height="2" fill="#484848" />
<rect x="619.5" y="447.5" width="12" height="12" fill="#ffffff" stroke="#333333" stroke-width="1"/>
<path d="M621.0,453.7 L623.9,456.5 L629.9,450.5" fill="none" stroke="#2a2a2a" stroke-width="1.25" />
<text x="635" y="457.5" font-size="12" fill="#000" textLength="42.5" lengthAdjust="spacingAndGlyphs" >Obrázek</text>
<text x="265" y="490" font-size="12" fill="#000" textLength="45.5" lengthAdjust="spacingAndGlyphs" >ID Točny</text>
<rect x="321.5" y="475.5" width="362" height="22" fill="#e1e1e1" stroke="#adadad" stroke-width="1"/>
<text x="326" y="490" font-size="12" fill="#000" textLength="3.5" lengthAdjust="spacingAndGlyphs" >-</text>
<path d="M670.500,484.500 l4,4 l4,-4" fill="none" stroke="#333" stroke-width="1.1" />
<text x="252" y="523" font-size="12" fill="#000" textLength="58.5" lengthAdjust="spacingAndGlyphs" >Kód Senzor</text>
<rect x="321.5" y="508.5" width="362" height="22" fill="#e1e1e1" stroke="#adadad" stroke-width="1"/>
<path d="M670.500,517.500 l4,4 l4,-4" fill="none" stroke="#333" stroke-width="1.1" />
<rect x="212.5" y="553.5" width="476" height="71" fill="none" stroke="#dcdcdc" stroke-width="1"/>
<rect x="219" y="548" width="48" height="12" fill="#ffffff" />
<text x="221" y="557.5" font-size="12" fill="#000" textLength="44" lengthAdjust="spacingAndGlyphs" >Virtuální</text>
<rect x="222.5" y="570.0" width="12" height="12.0" fill="#ffffff" stroke="#333333" stroke-width="1"/>
<text x="238" y="579.5" font-size="12" fill="#000" textLength="43.8" lengthAdjust="spacingAndGlyphs" >Virtuální</text>
<text x="222" y="607.5" font-size="12" fill="#000" textLength="83.5" lengthAdjust="spacingAndGlyphs" >Podřízené bloky</text>
<rect x="316.5" y="593.5" width="302" height="22" fill="#fff" stroke="#7a7a7a" stroke-width="1"/>
<rect x="630.5" y="594.5" width="47" height="20" fill="#e1e1e1" stroke="#adadad" stroke-width="1"/>
<rect x="650" y="607" width="2" height="2" fill="#484848" />
<rect x="653" y="607" width="2" height="2" fill="#484848" />
<rect x="656" y="607" width="2" height="2" fill="#484848" />
<rect x="704" y="167" width="1" height="477" fill="#a0a0a0" />
<rect x="716.5" y="175.5" width="343" height="437" fill="none" stroke="#dcdcdc" stroke-width="1"/>
<rect x="723" y="170" width="55" height="14" fill="#ffffff" />
<text x="725" y="180" font-size="12" fill="#000" textLength="51" lengthAdjust="spacingAndGlyphs" >Nastavení</text>
<rect x="736.5" y="196.5" width="12" height="12" fill="#ffffff" stroke="#333333" stroke-width="1"/>
<text x="752" y="206.5" font-size="12" fill="#000" textLength="173.5" lengthAdjust="spacingAndGlyphs" >Elektrifikováno (Trolejové vedení)</text>
<rect x="736.5" y="211.5" width="12" height="12" fill="#ffffff" stroke="#333333" stroke-width="1"/>
<text x="752" y="221.5" font-size="12" fill="#000" textLength="101" lengthAdjust="spacingAndGlyphs" >Vyřazeno z provozu</text>
<rect x="736.5" y="226.5" width="12" height="12" fill="#ffffff" stroke="#333333" stroke-width="1"/>
<path d="M738.0,232.7 L740.9,235.5 L746.9,229.5" fill="none" stroke="#2a2a2a" stroke-width="1.25" />
<text x="752" y="236.5" font-size="12" fill="#000" textLength="39" lengthAdjust="spacingAndGlyphs" >Čekejte</text>
<rect x="736.5" y="241.5" width="12" height="12" fill="#ffffff" stroke="#333333" stroke-width="1"/>
<text x="752" y="251.5" font-size="12" fill="#000" textLength="67.5" lengthAdjust="spacingAndGlyphs" >Malý symbol</text>
<rect x="736.5" y="256.5" width="12" height="12" fill="#ffffff" stroke="#333333" stroke-width="1"/>
<path d="M738.0,262.7 L740.9,265.5 L746.9,259.5" fill="none" stroke="#2a2a2a" stroke-width="1.25" />
<text x="752" y="266.5" font-size="12" fill="#000" textLength="92.5" lengthAdjust="spacingAndGlyphs" >Polo automaticky</text>
<rect x="736.5" y="271.5" width="12" height="12" fill="#ffffff" stroke="#333333" stroke-width="1"/>
<text x="752" y="281.5" font-size="12" fill="#000" textLength="107" lengthAdjust="spacingAndGlyphs" >Povolit stínové vlaky</text>
<rect x="736.5" y="286.5" width="12" height="12" fill="#ffffff" stroke="#bcbcbc" stroke-width="1"/>
<text x="752" y="296.5" font-size="12" fill="#8a8a8a" textLength="86" lengthAdjust="spacingAndGlyphs" >Koncová stanice</text>
<rect x="736.5" y="301.5" width="12" height="12" fill="#ffffff" stroke="#333333" stroke-width="1"/>
<text x="752" y="311.5" font-size="12" fill="#000" textLength="34" lengthAdjust="spacingAndGlyphs" >Silnice</text>
<rect x="736.5" y="316.5" width="12" height="12" fill="#ffffff" stroke="#333333" stroke-width="1"/>
<path d="M738.0,322.7 L740.9,325.5 L746.9,319.5" fill="none" stroke="#2a2a2a" stroke-width="1.25" />
<text x="752" y="326.5" font-size="12" fill="#000" textLength="112" lengthAdjust="spacingAndGlyphs" >Povolit změnu směru</text>
<rect x="736.5" y="331.5" width="12" height="12" fill="#ffffff" stroke="#333333" stroke-width="1"/>
<text x="752" y="341.5" font-size="12" fill="#000" textLength="78" lengthAdjust="spacingAndGlyphs" >Zastav ovladač</text>
<rect x="736.5" y="346.5" width="12" height="12" fill="#ffffff" stroke="#333333" stroke-width="1"/>
<text x="752" y="356.5" font-size="12" fill="#000" textLength="133.5" lengthAdjust="spacingAndGlyphs" >Přijmout BiDi lokomotivu</text>
<rect x="736.5" y="365.5" width="12" height="12" fill="#ffffff" stroke="#333333" stroke-width="1"/>
<text x="752" y="376" font-size="12" fill="#000" textLength="19" lengthAdjust="spacingAndGlyphs" >BBT</text>
<rect x="736.5" y="385.5" width="12" height="12" fill="#ffffff" stroke="#333333" stroke-width="1"/>
<text x="752" y="395.5" font-size="12" fill="#000" textLength="55.5" lengthAdjust="spacingAndGlyphs" >Hlavní trať</text>
<rect x="736.5" y="400.5" width="12" height="12" fill="#ffffff" stroke="#333333" stroke-width="1"/>
<text x="752" y="410.5" font-size="12" fill="#000" textLength="80" lengthAdjust="spacingAndGlyphs" >Spát při zavření</text>
<rect x="736.5" y="420.5" width="12" height="12" fill="#ffffff" stroke="#333333" stroke-width="1"/>
<text x="752" y="430.5" font-size="12" fill="#000" textLength="164" lengthAdjust="spacingAndGlyphs" >Volný předchozí blok na vstupu</text>
<rect x="736.5" y="463.0" width="12" height="12.0" fill="#ffffff" stroke="#333333" stroke-width="1"/>
<path d="M738.0,469.2 L740.9,472.0 L746.9,466.0" fill="none" stroke="#2a2a2a" stroke-width="1.25" />
<text x="752" y="473.0" font-size="12" fill="#000" textLength="42.5" lengthAdjust="spacingAndGlyphs" >Zobrazit</text>
<rect x="736.5" y="478.0" width="12" height="12.0" fill="#ffffff" stroke="#333333" stroke-width="1"/>
<path d="M738.0,484.2 L740.9,487.0 L746.9,481.0" fill="none" stroke="#2a2a2a" stroke-width="1.25" />
<text x="752" y="488.0" font-size="12" fill="#000" textLength="231" lengthAdjust="spacingAndGlyphs" >Povolit přístup k vozům přítomných v bloku</text>
<rect x="736.5" y="493.0" width="12" height="12.0" fill="#ffffff" stroke="#333333" stroke-width="1"/>
<text x="752" y="503.0" font-size="12" fill="#000" textLength="57.5" lengthAdjust="spacingAndGlyphs" >Střed vlaku</text>
<rect x="736.5" y="508.0" width="12" height="12.0" fill="#ffffff" stroke="#333333" stroke-width="1"/>
<text x="752" y="518.0" font-size="12" fill="#000" textLength="210.5" lengthAdjust="spacingAndGlyphs" >Povolit následující blok v případě čekání</text>
<rect x="736.5" y="523.0" width="12" height="12.0" fill="#ffffff" stroke="#333333" stroke-width="1"/>
<path d="M738.0,529.2 L740.9,532.0 L746.9,526.0" fill="none" stroke="#2a2a2a" stroke-width="1.25" />
<text x="752" y="533.0" font-size="12" fill="#000" textLength="54" lengthAdjust="spacingAndGlyphs" >Polorizace</text>
<rect x="736.5" y="538.0" width="12" height="12.0" fill="#ffffff" stroke="#333333" stroke-width="1"/>
<text x="752" y="548.0" font-size="12" fill="#000" textLength="149" lengthAdjust="spacingAndGlyphs" >Ochrana proti nárazu zezadu</text>
<rect x="736.5" y="553.0" width="12" height="12.0" fill="#ffffff" stroke="#333333" stroke-width="1"/>
<path d="M738.0,559.2 L740.9,562.0 L746.9,556.0" fill="none" stroke="#2a2a2a" stroke-width="1.25" />
<text x="752" y="563.0" font-size="12" fill="#000" textLength="221" lengthAdjust="spacingAndGlyphs" >Kontroluj volno v cíli dokud nedosáhne IN</text>
<text x="803" y="374.5" font-size="12" fill="#000" textLength="31" lengthAdjust="spacingAndGlyphs" >Pevný</text>
<rect x="840.5" y="360.5" width="38" height="22" fill="#f3f3f3" stroke="#adadad" stroke-width="1"/>
<rect x="840.5" y="360.5" width="22" height="22" fill="#ffffff" stroke="#7a7a7a" stroke-width="1"/>
<rect x="862" y="361" width="1" height="21" fill="#ffffff" />
<rect x="863.5" y="362.5" width="13" height="8" fill="#e1e1e1" stroke="#adadad" stroke-width="1"/>
<rect x="863.5" y="372.5" width="13" height="8" fill="#e1e1e1" stroke="#adadad" stroke-width="1"/>
<path d="M867.0,368.0 L870.0,365.0 L873.0,368.0 Z" fill="#111" />
<path d="M867.0,375.0 L870.0,378.0 L873.0,375.0 Z" fill="#111" />
<text x="846" y="375" font-size="12" fill="#000" textLength="6" lengthAdjust="spacingAndGlyphs" >0</text>
<rect x="934.5" y="420.5" width="12" height="12" fill="#ffffff" stroke="#333333" stroke-width="1"/>
<path d="M936.0,426.7 L938.9,429.5 L944.9,423.5" fill="none" stroke="#2a2a2a" stroke-width="1.25" />
<text x="950" y="430" font-size="12" fill="#000" textLength="7" lengthAdjust="spacingAndGlyphs" >+</text>
<rect x="974.5" y="420.5" width="12" height="12" fill="#ffffff" stroke="#333333" stroke-width="1"/>
<path d="M976.0,426.7 L978.9,429.5 L984.9,423.5" fill="none" stroke="#2a2a2a" stroke-width="1.25" />
<text x="990" y="430" font-size="12" fill="#000" textLength="4" lengthAdjust="spacingAndGlyphs" >-</text>
<rect x="1011.5" y="420.5" width="12" height="12" fill="#ffffff" stroke="#333333" stroke-width="1"/>
<path d="M1013.0,426.7 L1015.9,429.5 L1021.9,423.5" fill="none" stroke="#2a2a2a" stroke-width="1.25" />
<text x="1027" y="430" font-size="12" fill="#000" textLength="24.5" lengthAdjust="spacingAndGlyphs" >Trasa</text>
<text x="835" y="452.5" font-size="12" fill="#000" textLength="56" lengthAdjust="spacingAndGlyphs" >Max. délka</text>
<rect x="902.5" y="438.5" width="56" height="22" fill="#f3f3f3" stroke="#adadad" stroke-width="1"/>
<rect x="902.5" y="438.5" width="40" height="22" fill="#ffffff" stroke="#7a7a7a" stroke-width="1"/>
<rect x="942" y="439" width="1" height="21" fill="#ffffff" />
<rect x="943.5" y="440.5" width="13" height="8" fill="#e1e1e1" stroke="#adadad" stroke-width="1"/>
<rect x="943.5" y="450.5" width="13" height="8" fill="#e1e1e1" stroke="#adadad" stroke-width="1"/>
<path d="M947.0,446.0 L950.0,443.0 L953.0,446.0 Z" fill="#111" />
<path d="M947.0,453.0 L950.0,456.0 L953.0,453.0 Z" fill="#111" />
<text x="908" y="453" font-size="12" fill="#000" textLength="6" lengthAdjust="spacingAndGlyphs" >0</text>
<rect x="727.5" y="582.5" width="72" height="20" fill="#e1e1e1" stroke="#adadad" stroke-width="1"/>
<text x="746" y="596" font-size="12" fill="#000" textLength="34.8" lengthAdjust="spacingAndGlyphs" >Akce...</text>
<rect x="1051" y="163" width="12" height="508" fill="#ffffff" />
<rect x="1051" y="163" width="1" height="506" fill="#e3e3e3" />
<rect x="1052" y="161" width="3" height="511" fill="#ffffff" />
<rect x="1055" y="159" width="1" height="513" fill="#dcdcdc" />
<rect x="1056" y="133" width="7" height="578" fill="#f0f0f0" />
<rect x="1052" y="161" width="1" height="1" fill="#7e7e7e" />
<rect x="202" y="652" width="849" height="15" fill="#f0f0f0" />
<rect x="219" y="652" width="786" height="15" fill="#cdcdcd" />
<path d="M211.500,655.500 l-4,4 l4,4" fill="none" stroke="#404040" stroke-width="1.7" />
<path d="M1040.500,655.500 l4,4 l-4,4" fill="none" stroke="#404040" stroke-width="1.7" />
<rect x="197.5" y="685.5" width="72" height="20" fill="#e1e1e1" stroke="#adadad" stroke-width="1"/>
<text x="230.5" y="699" font-size="12" fill="#000" textLength="5.3" lengthAdjust="spacingAndGlyphs" >&lt;</text>
<rect x="282.5" y="685.5" width="72" height="20" fill="#e1e1e1" stroke="#adadad" stroke-width="1"/>
<text x="315" y="699" font-size="12" fill="#000" textLength="5.5" lengthAdjust="spacingAndGlyphs" >&gt;</text>
<rect x="367.5" y="685.5" width="72" height="20" fill="#e1e1e1" stroke="#adadad" stroke-width="1"/>
<text x="393.8" y="699" font-size="12" fill="#000" textLength="18.7" lengthAdjust="spacingAndGlyphs" >&lt;/&gt;</text>
<rect x="452.5" y="685.5" width="47" height="20" fill="#e1e1e1" stroke="#adadad" stroke-width="1"/>
<text x="472" y="699" font-size="12" fill="#000" textLength="6.2" lengthAdjust="spacingAndGlyphs" >+</text>
<rect x="512.5" y="685.5" width="47" height="20" fill="#e1e1e1" stroke="#adadad" stroke-width="1"/>
<text x="524.3" y="699" font-size="12" fill="#000" textLength="22.7" lengthAdjust="spacingAndGlyphs" >ABC</text>
<rect x="731.5" y="685.5" width="72" height="20" fill="#e1e1e1" stroke="#adadad" stroke-width="1"/>
<text x="759" y="699" font-size="12" fill="#000" textLength="16" lengthAdjust="spacingAndGlyphs" >OK</text>
<rect x="814.5" y="685.5" width="72" height="20" fill="#e1e1e1" stroke="#adadad" stroke-width="1"/>
<text x="832.8" y="699" font-size="12" fill="#000" textLength="34.2" lengthAdjust="spacingAndGlyphs" >Storno</text>
<rect x="897.5" y="685.5" width="72" height="20" fill="#e1e1e1" stroke="#adadad" stroke-width="1"/>
<text x="917" y="699" font-size="12" fill="#000" textLength="32" lengthAdjust="spacingAndGlyphs" >Použít</text>
<rect x="980.0" y="685.5" width="72.0" height="20" fill="#e1e1e1" stroke="#adadad" stroke-width="1"/>
<text x="988.8" y="699" font-size="12" fill="#000" textLength="54.2" lengthAdjust="spacingAndGlyphs" >Nápověda</text>
<rect x="1059" y="707" width="2" height="2" fill="#b0b0b0" />
<rect x="1056" y="707" width="2" height="2" fill="#b0b0b0" />
<rect x="1059" y="704" width="2" height="2" fill="#b0b0b0" />
<rect x="1053" y="707" width="2" height="2" fill="#b0b0b0" />
<rect x="1056" y="704" width="2" height="2" fill="#b0b0b0" />
<rect x="1059" y="701" width="2" height="2" fill="#b0b0b0" />
<rect x="0" y="728" width="1366" height="40" fill="url(#tb)" />
<path d="M16,742.3 l7,-1 v6.700 h-7 z M24,741.200 l8.500,-1.200 v7.900 h-8.500 z M16,749 h7 v6.700 l-7,-1 z M24,749 h8.500 v7.900 l-8.500,-1.200 z" fill="#ffffff" />
<rect x="48" y="729" width="288" height="39" fill="#f3f3f3" />
<rect x="48" y="728" width="288" height="1" fill="#e6e6e6" />
<rect x="48" y="767" width="288" height="1" fill="#cfcfcf" />
<circle cx="70.500" cy="745.800" r="5.300" fill="none" stroke="#222" stroke-width="1.4"/>
<path d="M66.800,749.800 L60.300,756" fill="none" stroke="#222" stroke-width="1.4" />
<text x="88.7" y="754" font-size="15.5" fill="#2b2b2b" textLength="44.0" lengthAdjust="spacingAndGlyphs" >Hledat</text>
<path d="M288.3,735.9000000000001 Q291.238,744.2620000000001 299.6,747.2 Q291.238,750.138 288.3,758.5 Q285.362,750.138 277.0,747.2 Q285.362,744.2620000000001 288.3,735.9000000000001 Z" fill="#f7c22a" />
<path d="M311,745.4 Q312.456,749.544 316.6,751 Q312.456,752.456 311,756.6 Q309.544,752.456 305.4,751 Q309.544,749.544 311,745.4 Z" fill="#f9cc3c" />
<g transform="rotate(20 268.8 756)">
<path d="M268.8,751.5 Q269.97,754.83 273.3,756 Q269.97,757.17 268.8,760.5 Q267.63,757.17 264.3,756 Q267.63,754.83 268.8,751.5 Z" fill="#2d9be8" />
</g>
<circle cx="304.300" cy="738" r="1.7" fill="#e8643c"/><circle cx="322.500" cy="756.500" r="1.700" fill="#74b43c"/>
<path d="M353.500,743.500 h9 v8 h-9 z" fill="none" stroke="#fff" stroke-width="1.2" />
<path d="M352,740.800 h12 M352,754.300 h12 M352.600,740.800 v1.500 M352.600,754.300 v-1.500 M363.400,740.800 v1.500 M363.400,754.300 v-1.500 M366.700,745 v9.500" fill="none" stroke="#fff" stroke-width="1.2" />
<circle cx="366.700" cy="741.500" r="1" fill="#fff"/>
<path d="M399.300,741.600 h22.800 v14.700 q0,3.500 -3.500,3.500 h-15.800 q-3.500,0 -3.500,-3.500 z" fill="#f4f4f4" />
<path d="M405.300,741.600 v-2.500 q0,-1.800 1.800,-1.800 h7.200 q1.800,0 1.800,1.800 v2.500" fill="none" stroke="#3a98e0" stroke-width="1.6" />
<rect x="405.8" y="745.6" width="4.2" height="4.2" fill="#f25022" />
<rect x="411" y="745.6" width="4.2" height="4.2" fill="#7fba00" />
<rect x="405.8" y="750.8" width="4.2" height="4.2" fill="#00a4ef" />
<rect x="411" y="750.8" width="4.2" height="4.2" fill="#ffb900" />
<defs><linearGradient id="edg" x1="0" x2="0.6" y1="0" y2="1"><stop offset="0" stop-color="#2fa6e8"/><stop offset="0.55" stop-color="#1a74d2"/><stop offset="1" stop-color="#0c4c98"/></linearGradient><linearGradient id="edg2" x1="0" x2="1" y1="0" y2="0.3"><stop offset="0" stop-color="#2eb4dc"/><stop offset="0.55" stop-color="#3ccb9c"/><stop offset="1" stop-color="#6fdc55"/></linearGradient></defs>
<circle cx="460" cy="747.700" r="12.200" fill="url(#edg)"/>
<path d="M449.300,742 A12.200,12.200 0 0,1 472.200,748.300 Q472,753.200 466.500,753.600 Q462.600,753.500 463,750.200 Q466.200,750.300 466.500,747.600 Q466,742.600 460,742.200 Q453.500,741.800 449.300,746 Z" fill="url(#edg2)" />
<path d="M456.300,748.800 Q457.300,744.600 462,744.600 Q466.300,744.900 466.500,748 Q466,750.300 463,750.100 Q462.300,752.800 464.500,755 Q458.500,754.800 456.300,748.800 Z" fill="#21323f" />
<path d="M448.200,751 Q452,746 456.300,748.800 Q458,755 465,755.500 Q468,755.300 470.500,753.500 Q466,760.500 458,759.600 Q450.500,757.800 448.200,751 Z" fill="#0d529f" opacity="0.85"/>
<rect x="440" y="765.5" width="40" height="2.5" fill="#76b9ed" />
<path d="M498.400,738.600 h8.600 l1.500,1.800 h11.200 v15.700 h-21.300 z" fill="#e9a825" />
<path d="M498.400,741.200 h21.300 v14.900 h-21.300 z" fill="#fcd462" />
<path d="M502.200,748.800 h13.600 v7.300 h-4.200 v-3.600 h-5.100 v3.600 h-4.300 z" fill="#3a8ee6" />
<rect x="534" y="728" width="48" height="40" fill="#46575f" />
<rect x="534" y="765.5" width="48" height="2.5" fill="#76b9ed" />
<rect x="546.3" y="736.0999999999999" width="23.4" height="23.5" fill="#fdfdfd" stroke="#f0f0f0" stroke-width="0.6" rx="5.5" style="shape-rendering:geometricPrecision"/>
<text x="552.5" y="748.3" font-size="7.5" fill="#111" font-style="italic" font-family="Liberation Serif" textLength="15.5" lengthAdjust="spacingAndGlyphs" >ocrail</text>
<path d="M547.500,748.600 H569" fill="none" stroke="#222" stroke-width="0.7" />
<path d="M550.600,743 V754.500 M550.600,743.300 q3.500,-0.800 3.300,1.800 q-0.300,2 -3.300,2.200 M551.500,747.600 l2.600,6.600" fill="none" stroke="#111" stroke-width="0.9" />
<text x="560.5" y="752.5" font-size="1.8" fill="#777" textLength="6.0" lengthAdjust="spacingAndGlyphs" >modelbahn</text>
<rect x="560.5" y="751.3" width="6.0" height="0.7" fill="#aaaaaa" />
<rect x="587" y="765.5" width="40" height="2.5" fill="#76b9ed" />
<rect x="595.5" y="738.8" width="21.2" height="17.1" fill="#f0f0f0" stroke="#dcdcdc" stroke-width="1"/>
<defs><linearGradient id="wapp" x1="0" x2="0" y1="0" y2="1"><stop offset="0" stop-color="#2e6fae"/><stop offset="0.35" stop-color="#3f8f86"/><stop offset="1" stop-color="#4fa274"/></linearGradient></defs>
<rect x="597.2" y="741.8" width="8.6" height="11.8" fill="url(#wapp)" />
<rect x="608" y="742.5" width="4" height="1.3" fill="#d4d4d4" />
<rect x="608" y="745.5" width="4" height="1.3" fill="#d4d4d4" />
<rect x="608" y="748.5" width="4" height="1.3" fill="#d4d4d4" />
<rect x="608" y="751.5" width="4" height="1.3" fill="#d4d4d4" />
<rect x="614" y="741" width="1.3" height="8" fill="#2f7fb8" />
<rect x="614" y="745" width="1.3" height="4" fill="#3f9a6a" />
<rect x="613" y="739.3" width="3" height="0.9" fill="#99a" />
<defs><linearGradient id="cld" x1="0" x2="0.5" y1="0" y2="1"><stop offset="0" stop-color="#e4edfa"/><stop offset="1" stop-color="#a9c0e4"/></linearGradient><linearGradient id="drp" x1="0" x2="0" y1="0" y2="1"><stop offset="0" stop-color="#49a6f6"/><stop offset="1" stop-color="#1b6fe8"/></linearGradient></defs>
<path d="M986.500,754 q-4.700,-0.200 -4.700,-4.300 q0.200,-3.800 4.300,-4.200 q1,-6.800 7.600,-6.900 q4.700,0.100 6.300,4.400 q5.800,0.200 6,5.500 q-0.200,5.300 -5.500,5.500 z" fill="url(#cld)" />
<path d="M995,748.800 q4.500,2.600 6.600,5.800 q1.700,3.300 -1.200,5 q-3.200,1.300 -4.700,-2 q-1.100,-3.700 -0.700,-8.800 z" fill="url(#drp)" />
<circle cx="1003.300" cy="739" r="2.900" fill="#d8281e"/>
<text x="1014.4" y="753" font-size="14.5" fill="#ffffff" textLength="20.6" lengthAdjust="spacingAndGlyphs" >7°C</text>
<text x="1044" y="753" font-size="14.5" fill="#ffffff" textLength="63.7" lengthAdjust="spacingAndGlyphs" >Slabý déšť</text>
<path d="M1134,750.500 l5.500,-5.500 l5.500,5.500" fill="none" stroke="#fff" stroke-width="1.4" />
<path d="M1155,745.500 h3 l4,-3.500 v12 l-4,-3.500 h-3 z" fill="none" stroke="#fff" stroke-width="1.1" />
<path d="M1164.500,744.500 q2,3.500 0,7 M1167.500,742.500 q3,5.500 0,11" fill="none" stroke="#fff" stroke-width="1" />
<path d="M1171,741 q3.500,7 0,14" fill="none" stroke="#9aa" stroke-width="0.9" />
<rect x="1182.6" y="744.9" width="6.4" height="6.5" fill="none" stroke="#fff" stroke-width="1.2" rx="2" style="shape-rendering:geometricPrecision"/>
<path d="M1190,747.200 l2.800,-1.700 v5.300 l-2.800,-1.700 M1183,741.800 q3,-1.600 6,0 M1183,754.600 q3,1.600 6,0" fill="none" stroke="#fff" stroke-width="1" />
<rect x="1207.1" y="744.8000000000001" width="10.8" height="7.0" fill="none" stroke="#fff" stroke-width="1.2"/>
<rect x="1208.5" y="746.2" width="7.0" height="4.2" fill="#fff" />
<rect x="1218.5" y="746.4" width="1.3" height="3.8" fill="#fff" />
<path d="M1202.800,745.700 h3 v3.600 h-3 z M1203.600,743.700 v2 M1205.200,743.700 v2 M1204.300,749.500 v2.200 h2.500" fill="none" stroke="#fff" stroke-width="0.9" />
<path d="M1231.500,755 A11.5,11.5 0 0,1 1243,743.500" fill="none" stroke="#8a97a3" stroke-width="1.2" />
<path d="M1235,755 A8,8 0 0,1 1243,747" fill="none" stroke="#8a97a3" stroke-width="1.2" />
<path d="M1238.500,755 A4.5,4.5 0 0,1 1243,750.500" fill="none" stroke="#fff" stroke-width="1.3" />
<circle cx="1242" cy="754" r="1.5" fill="#fff"/>
<text x="1266" y="742.5" font-size="12" fill="#ffffff" textLength="26.8" lengthAdjust="spacingAndGlyphs" >21:39</text>
<text x="1253.6" y="760.3" font-size="12" fill="#ffffff" textLength="52.9" lengthAdjust="spacingAndGlyphs" >13.04.2023</text>
<path d="M1325.500,741 h15 v12 h-4.800 l-2.700,2.800 l-2.700,-2.800 h-4.800 z" fill="none" stroke="#fff" stroke-width="1.3" />
<rect x="1361" y="728" width="1" height="40" fill="#55616c" />
</svg>
</body></html>
